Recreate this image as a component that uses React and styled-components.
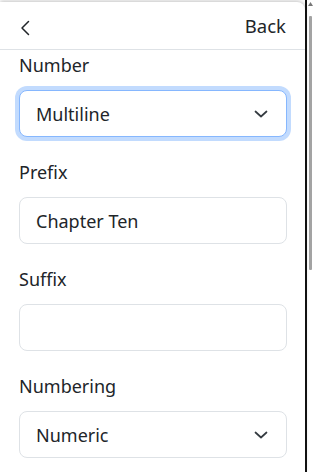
import React from "react";
import styled, { createGlobalStyle } from "styled-components";

const GlobalStyle = createGlobalStyle`
  html, body {
    margin: 0;
    padding: 0;
    background: #fff;
  }
  body {
    font-family: "Noto Sans", "Open Sans", sans-serif;
    color: #212529;
  }
`;

const Screen = styled.div`
  display: flex;
  width: 313px;
  height: 472px;
  overflow: hidden;
`;

const Panel = styled.div`
  width: 305px;
  flex: none;
  margin-top: 2px;
  background: #fff;
  border-top-right-radius: 8px;
  box-shadow: 0 -1px 4px rgba(0, 0, 0, 0.25);
  display: flex;
  flex-direction: column;
`;

const Edge = styled.div`
  width: 2px;
  flex: none;
  background: #111;
`;

const Track = styled.div`
  flex: 1;
  display: flex;
  flex-direction: column;
  align-items: center;
  padding-top: 2px;
`;

const Thumb = styled.div`
  width: 3px;
  height: 254px;
  margin-top: 10px;
  margin-left: 1px;
  background: #a3a3a3;
  border-radius: 1px;
`;

const Header = styled.div`
  height: 47px;
  display: flex;
  align-items: center;
  justify-content: space-between;
  padding: 0 19px 0 20px;
  border-bottom: 1px solid #dee2e6;
`;

const BackText = styled.span`
  font-size: 18.5px;
  line-height: 1;
  margin-top: 1px;
`;

const Body = styled.div`
  padding: 2px 18px 0 19px;
  display: flex;
  flex-direction: column;
  gap: 22px;
`;

const Group = styled.div`
  display: flex;
  flex-direction: column;
`;

const Label = styled.label`
  font-size: 18px;
  line-height: 27px;
  margin-bottom: 11px;
`;

const Field = styled.div`
  height: 47px;
  box-sizing: border-box;
  display: flex;
  align-items: center;
  justify-content: space-between;
  padding: 0 17px 0 16px;
  border: 1px solid ${(p) => (p.$focus ? "#86b7fe" : "#dee2e6")};
  border-radius: 8px;
  box-shadow: ${(p) => (p.$focus ? "0 0 0 4px rgba(13, 110, 253, 0.25)" : "none")};
  font-size: 18px;
  background: #fff;
`;

const Chevron = () => (
  <svg width="16" height="16" viewBox="0 0 16 16" fill="none">
    <path d="M2.5 5.5L8 10.5l5.5-5" stroke="#343a40" strokeWidth="1.7" strokeLinecap="round" strokeLinejoin="round" />
  </svg>
);

const groups = [
  { label: "Number", value: "Multiline", select: true, focus: true },
  { label: "Prefix", value: "Chapter Ten" },
  { label: "Suffix", value: "" },
  { label: "Numbering", value: "Numeric", select: true },
];

export default function App() {
  return (
    <>
      <GlobalStyle />
      <Screen>
        <Panel>
          <Header>
            <svg width="10" height="16" viewBox="0 0 10 16" fill="none" style={{ marginTop: 4 }}>
              <path d="M8.5 1.5L2 8l6.5 6.5" stroke="#212529" strokeWidth="1.5" strokeLinecap="round" strokeLinejoin="round" />
            </svg>
            <BackText>Back</BackText>
          </Header>
          <Body>
            {groups.map((g) => (
              <Group key={g.label}>
                <Label>{g.label}</Label>
                <Field $focus={g.focus}>
                  <span>{g.value}</span>
                  {g.select && <Chevron />}
                </Field>
              </Group>
            ))}
          </Body>
        </Panel>
        <Edge />
        <Track>
          <svg width="5" height="4" viewBox="0 0 5 4">
            <path d="M2.5 0L5 4H0z" fill="#777" />
          </svg>
          <Thumb />
        </Track>
      </Screen>
    </>
  );
}
